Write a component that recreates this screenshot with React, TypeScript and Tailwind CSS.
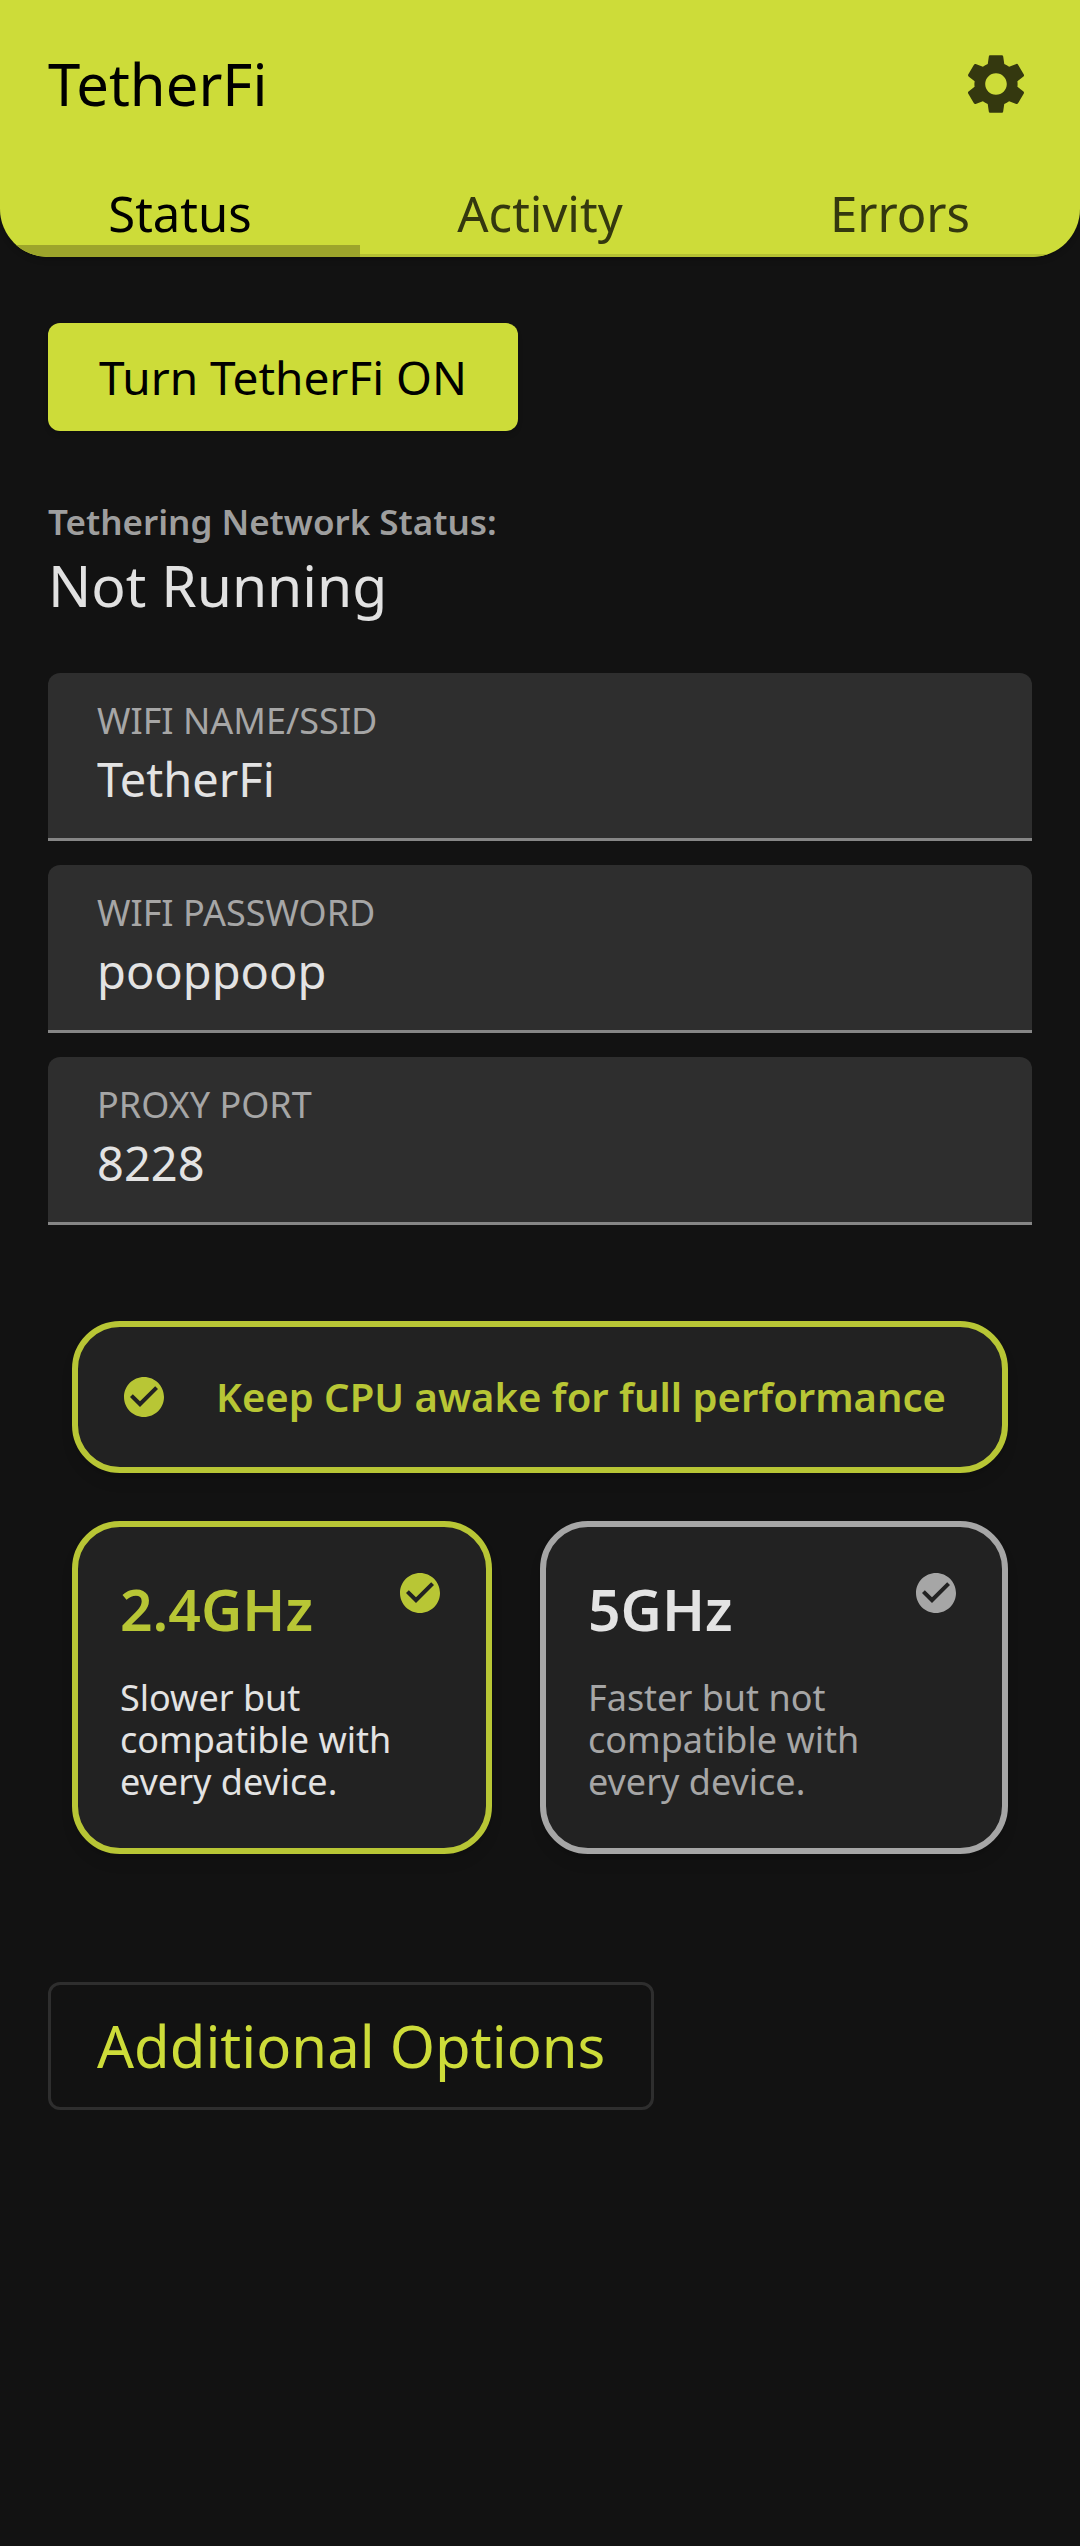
import { useState } from "react";
import { MdCheckCircle, MdSettings } from "react-icons/md";

const TABS = ["Status", "Activity", "Errors"];

const FIELDS = [
  { id: "ssid", label: "WIFI NAME/SSID", value: "TetherFi" },
  { id: "password", label: "WIFI PASSWORD", value: "pooppoop" },
  { id: "port", label: "PROXY PORT", value: "8228" },
];

const BANDS = [
  { id: "2.4", name: "2.4GHz", text: "Slower but compatible with every device." },
  { id: "5", name: "5GHz", text: "Faster but not compatible with every device." },
];

function Header() {
  const [active, setActive] = useState("Status");
  return (
    <header className="overflow-hidden rounded-b-[48px] bg-[#cddc39] pt-12 shadow-md">
      <div className="flex h-[72px] items-center justify-between px-12">
        <h1 className="text-[58px] leading-[72px] text-black">TetherFi</h1>
        <button type="button" aria-label="Settings" className="text-[#34380f]">
          <MdSettings className="size-[72px]" />
        </button>
      </div>
      <div role="tablist" className="mt-[61px] grid grid-cols-3">
        {TABS.map((tab) => (
          <button
            key={tab}
            type="button"
            role="tab"
            aria-selected={tab === active}
            onClick={() => setActive(tab)}
            className={
              tab === active
                ? "border-b-12 border-[#9da52b] text-[49px] leading-[64px] text-black"
                : "border-b-3 border-[#b5c233] pb-[9px] text-[49px] leading-[64px] text-[#34380f]"
            }
          >
            {tab}
          </button>
        ))}
      </div>
    </header>
  );
}

function Field({ id, label, value }: { id: string; label: string; value: string }) {
  return (
    <div className="rounded-t-xl border-b-3 border-[#868686] bg-[#2e2e2e] px-[49px] pt-6 pb-[25px]">
      <label htmlFor={id} className="block text-[36px] leading-[48px] text-[#a6a6a6]">
        {label}
      </label>
      <input
        id={id}
        type="text"
        defaultValue={value}
        className="block h-[68px] w-full bg-transparent text-[47px] leading-[68px] text-[#e3e3e3] outline-none"
      />
    </div>
  );
}

export default function App() {
  const [awake, setAwake] = useState(true);
  const [band, setBand] = useState("2.4");

  return (
    <div className="min-h-screen bg-[#121212] font-['Noto_Sans',sans-serif]">
      <Header />
      <main className="px-12 pt-[66px] pb-12">
        <button
          type="button"
          className="block h-[108px] rounded-xl bg-[#cddc39] px-[51px] text-[46px] leading-[60px] text-black shadow-md"
        >
          Turn TetherFi ON
        </button>

        <section className="mt-[67px]">
          <h2 className="text-[35px] leading-[48px] font-semibold text-[#9e9e9e]">
            Tethering Network Status:
          </h2>
          <p className="text-[57px] leading-[79px] text-[#e1e1e1]">Not Running</p>
        </section>

        <section className="mt-12 flex flex-col gap-6">
          {FIELDS.map((f) => (
            <Field key={f.id} {...f} />
          ))}
        </section>

        <section className="mx-6 mt-24">
          <label
            className={
              awake
                ? "flex h-[152px] items-center gap-12 rounded-[48px] border-6 border-[#b8c635] bg-[#222222] px-[42px] text-[#b8c635] shadow-lg"
                : "flex h-[152px] items-center gap-12 rounded-[48px] border-6 border-[#a6a6a6] bg-[#222222] px-[42px] text-[#a6a6a6] shadow-lg"
            }
          >
            <span className="grid size-12 shrink-0">
              <input
                type="checkbox"
                checked={awake}
                onChange={(e) => setAwake(e.target.checked)}
                className="col-start-1 row-start-1 appearance-none"
              />
              <MdCheckCircle className="pointer-events-none col-start-1 row-start-1 size-12" />
            </span>
            <span className="text-[40px] leading-[60px] font-semibold">
              Keep CPU awake for full performance
            </span>
          </label>

          <div className="mt-12 grid grid-cols-[420fr_468fr] gap-12">
            {BANDS.map((b) => {
              const on = b.id === band;
              return (
                <label
                  key={b.id}
                  className={
                    on
                      ? "rounded-[48px] border-6 border-[#b8c635] bg-[#222222] px-[42px] pt-[42px] pb-[45px] text-[#b8c635] shadow-lg"
                      : "rounded-[48px] border-6 border-[#a6a6a6] bg-[#222222] px-[42px] pt-[42px] pb-[45px] text-[#a6a6a6] shadow-lg"
                  }
                >
                  <span className="flex items-start justify-between">
                    <span
                      className={
                        on
                          ? "text-[57px] leading-[80px] font-semibold"
                          : "text-[57px] leading-[80px] font-semibold text-[#e3e3e3]"
                      }
                    >
                      {b.name}
                    </span>
                    <span className="grid size-12 shrink-0">
                      <input
                        type="radio"
                        name="band"
                        checked={on}
                        onChange={() => setBand(b.id)}
                        className="col-start-1 row-start-1 appearance-none"
                      />
                      <MdCheckCircle className="pointer-events-none col-start-1 row-start-1 size-12" />
                    </span>
                  </span>
                  <span
                    className={
                      on
                        ? "mt-7 block max-w-80 text-[36px] leading-[42px] text-[#e3e3e3]"
                        : "mt-7 block max-w-80 text-[36px] leading-[42px]"
                    }
                  >
                    {b.text}
                  </span>
                </label>
              );
            })}
          </div>
        </section>

        <button
          type="button"
          className="mt-32 block h-32 rounded-xl border-3 border-[#2e2e2e] px-[46px] text-[58px] leading-[80px] text-[#cddc39]"
        >
          Additional Options
        </button>
      </main>
    </div>
  );
}
